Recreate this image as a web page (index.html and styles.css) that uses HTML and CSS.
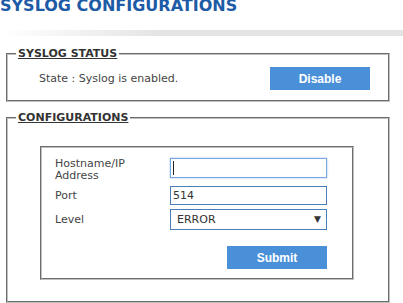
FILE: index.html
```html
<!DOCTYPE html>
<html lang="en">

<head>
	<meta charset="UTF-8">
	<title>Syslog Configurations</title>
	<meta name="viewport" content="width=device-width, initial-scale=1.0">
	<link rel="stylesheet" href="styles.css">
</head>

<body>
	<h1 class="page-title">SYSLOG CONFIGURATIONS</h1>
	<div class="title-bar"></div>

	<fieldset class="group status-group">
		<legend>SYSLOG STATUS</legend>
		<div class="status-row">
			<span class="status-text">State : Syslog is enabled.</span>
			<button class="btn" type="button">Disable</button>
		</div>
	</fieldset>

	<fieldset class="group config-group">
		<legend>CONFIGURATIONS</legend>
		<form class="config-box">
			<div class="form-row row-host">
				<label for="host">Hostname/IP Address</label>
				<span class="caret-wrap">
					<input type="text" id="host" class="field field-focus">
				</span>
			</div>
			<div class="form-row row-port">
				<label for="port">Port</label>
				<input type="text" id="port" class="field" value="514">
			</div>
			<div class="form-row row-level">
				<label for="level">Level</label>
				<div class="select-wrap">
					<select id="level" class="field">
						<option>ERROR</option>
						<option>WARNING</option>
						<option>INFO</option>
						<option>DEBUG</option>
					</select>
				</div>
			</div>
			<div class="form-actions">
				<button class="btn" type="button">Submit</button>
			</div>
		</form>
	</fieldset>
</body>

</html>
```

FILE: styles.css
```css
body {
	font-family: "DejaVu Sans", Verdana, sans-serif;
	font-size: 11px;
	color: #444;
	background: #fff;
	margin: 0;
}

.page-title {
	margin: 0;
	font-size: 16px;
	line-height: 14px;
	font-weight: bold;
	color: #1d5ba6;
	margin-top: -1px;
}

.title-bar {
	height: 6px;
	margin-top: 17px;
	background: linear-gradient(to right, #ffffff, #e4e4e4 40%, #e4e4e4);
}

.group {
	margin: 11px 13px 0 6px;
	padding: 0;
	border: 2px groove #c0c0c0;
}

.group legend {
	margin-left: 8px;
	padding: 0 2px;
	font-weight: bold;
	color: #333;
	text-decoration: underline;
	line-height: 13px;
}

.status-row {
	display: flex;
	align-items: center;
	justify-content: space-between;
	padding: 7px 18px 10px 31px;
}

.btn {
	width: 100px;
	height: 23px;
	padding: 0;
	border: none;
	background: #4a90d9;
	color: #fff;
	font-family: "Liberation Sans", Arial, sans-serif;
	font-size: 12px;
	font-weight: bold;
	cursor: pointer;
}

.config-group {
	margin-top: 9px;
}

.config-box {
	margin: 22px 34px 21px 32px;
	padding: 10px 25px 9px 13px;
	border: 2px groove #c0c0c0;
}

.form-row {
	display: flex;
	align-items: center;
}

.form-row label {
	width: 100px;
	margin-right: 15px;
	line-height: 12px;
}

.row-host {
	height: 20px;
	margin-bottom: 8px;
}

.row-host label {
	margin-top: 4px;
}

.row-port {
	height: 19px;
	margin-bottom: 4px;
}

.row-level {
	height: 21px;
}

.field {
	box-sizing: border-box;
	width: 157px;
	height: 100%;
	margin: 0;
	padding: 0 2px;
	border: 1px solid #4a7fb5;
	font-family: "DejaVu Sans", Verdana, sans-serif;
	font-size: 11px;
	color: #333;
	background: #fff;
	outline: none;
}

.field-focus {
	border-color: #7aa8de;
	box-shadow: 0 0 2px #9cc2ee;
}

.caret-wrap {
	position: relative;
	height: 20px;
}

.caret-wrap::after {
	content: "";
	position: absolute;
	left: 3px;
	top: 3px;
	width: 1px;
	height: 14px;
	background: #222;
}

.select-wrap {
	position: relative;
	height: 21px;
}

.select-wrap select {
	appearance: none;
	-webkit-appearance: none;
	padding-left: 6px;
	border-radius: 0;
}

.select-wrap::after {
	content: "\25BC";
	position: absolute;
	right: 6px;
	top: 5px;
	font-size: 9px;
	color: #333;
	pointer-events: none;
}

.form-actions {
	display: flex;
	justify-content: flex-end;
	margin-top: 16px;
}
```
